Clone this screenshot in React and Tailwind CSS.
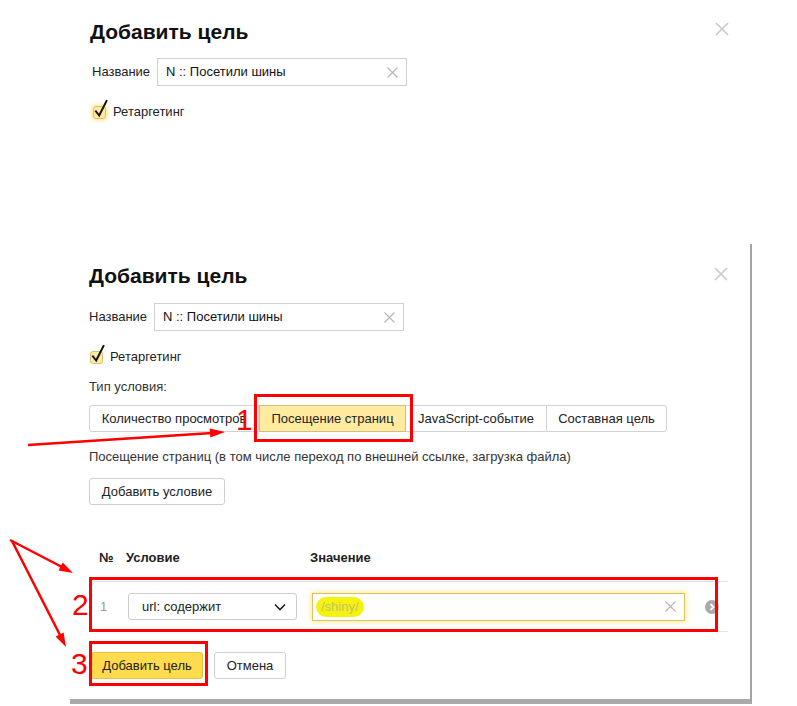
import React from "react";

function CloseIcon({ className = "" }) {
  return (
    <svg width="14" height="14" viewBox="0 0 14 14" className={className}>
      <path d="M1 1L13 13M13 1L1 13" stroke="#c8c8c8" strokeWidth="1.6" fill="none" />
    </svg>
  );
}

function ClearIcon() {
  return (
    <svg width="11" height="11" viewBox="0 0 11 11" className="shrink-0">
      <path d="M0.5 0.5L10.5 10.5M10.5 0.5L0.5 10.5" stroke="#b5b5b5" strokeWidth="1.1" fill="none" />
    </svg>
  );
}

function Checkbox({ glow }) {
  return (
    <div
      className={
        "relative w-[13px] h-[13px] rounded-[3px] bg-[#ffe9a3] border border-[#d6bf72] shrink-0 " +
        (glow ? "shadow-[0_0_4px_1px_#ffe27a]" : "")
      }
    >
      <svg width="16" height="20" viewBox="0 0 16 20" className="absolute left-[0px] top-[-8px]">
        <path d="M2 12.5L5.2 16.5L12.5 2" stroke="#111" strokeWidth="2" fill="none" strokeLinecap="square" />
      </svg>
    </div>
  );
}

function NameRow({ mt }) {
  return (
    <div className={"flex items-center " + mt}>
      <span className="w-[65px] shrink-0 text-[13px] text-[#222]">Название</span>
      <div className="w-[250px] h-[28px] border border-[#d0d0d0] flex items-center pl-[8px] pr-[8px] justify-between">
        <span className="text-[13px] text-[#111]">N :: Посетили шины</span>
        <ClearIcon />
      </div>
    </div>
  );
}

function RetargetRow({ mt, glow }) {
  return (
    <div className={"flex items-center h-[20px] " + mt}>
      <div className="ml-[1px]">
        <Checkbox glow={glow} />
      </div>
      <span className="ml-[7px] text-[13px] text-[#222]">Ретаргетинг</span>
    </div>
  );
}

export default function App() {
  return (
    <div className="relative w-[797px] h-[706px] bg-white overflow-hidden font-['Liberation_Sans',Arial,sans-serif] text-[13px] text-black">
      {/* First dialog (cropped) */}
      <section className="ml-[72px] w-[680px] h-[244px] pl-[18px] pr-[23px] pt-[20px]">
        <div className="flex items-start justify-between">
          <h1 className="h-[24px] leading-[24px] text-[21px] font-bold text-[#111]">Добавить цель</h1>
          <CloseIcon className="mt-[2px]" />
        </div>
        <div className="ml-[2px]">
          <NameRow mt="mt-[14px]" />
          <RetargetRow mt="mt-[16px]" glow />
        </div>
      </section>

      {/* Second dialog */}
      <section className="ml-[70px] w-[682px] h-[460px] border-r-2 border-b-[5px] border-r-[#a3a3a3] border-b-[#a9a9a9] pl-[19px] pr-[22px] pt-[20px]">
        <div className="flex items-start justify-between">
          <h1 className="h-[24px] leading-[24px] text-[21px] font-bold text-[#111]">Добавить цель</h1>
          <CloseIcon className="mt-[3px]" />
        </div>
        <NameRow mt="mt-[15px]" />
        <RetargetRow mt="mt-[16px]" />

        <div className="mt-[11px] leading-[18px] text-[#333]">Тип условия:</div>

        <div className="mt-[9px] flex h-[27px]">
          <div className="w-[170px] flex items-center justify-center border border-[#d2d2d2] rounded-l-[3px] text-[#222]">
            Количество просмотров
          </div>
          <div className="w-[147px] flex items-center justify-center border border-[#d3bf7c] bg-[#ffeba0] text-[#222]">
            Посещение страниц
          </div>
          <div className="w-[140px] flex items-center justify-center border-y border-[#d2d2d2] text-[#222]">
            JavaScript-событие
          </div>
          <div className="w-[121px] flex items-center justify-center border border-[#d2d2d2] rounded-r-[3px] text-[#222]">
            Составная цель
          </div>
        </div>

        <div className="mt-[16px] leading-[18px] text-[#333]">
          Посещение страниц (в том числе переход по внешней ссылке, загрузка файла)
        </div>

        <button className="mt-[12px] h-[27px] w-[136px] border border-[#cfcfcf] rounded-[3px] text-[13px] text-[#222] flex items-center justify-center">
          Добавить условие
        </button>

        <div className="mt-[44px] flex leading-[18px] font-bold text-[#222] w-[639px]">
          <span className="w-[37px] pl-[10px]">№</span>
          <span className="w-[184px]">Условие</span>
          <span>Значение</span>
        </div>

        <div className="mt-[14px] w-[639px] h-[51px] border-y border-[#e4e4e4] flex items-center">
          <span className="w-[39px] pl-[11px] text-[#999]">1</span>
          <div className="w-[169px] h-[27px] border border-[#cdcdcd] rounded-[3px] flex items-center justify-between pl-[13px] pr-[10px] text-[#222]">
            <span>url: содержит</span>
            <svg width="12" height="8" viewBox="0 0 12 8">
              <path d="M1 1.5L6 6.5L11 1.5" stroke="#222" strokeWidth="1.6" fill="none" />
            </svg>
          </div>
          <div className="ml-[15px] w-[373px] h-[28px] border border-[#dcc064] shadow-[0_0_5px_1px_#ffe88a] flex items-center justify-between pl-[3px] pr-[8px]">
            <span className="px-[5px] h-[20px] leading-[20px] rounded-full bg-[#f4f20e] text-[#c4c26a] text-[13px]">
              /shiny/
            </span>
            <ClearIcon />
          </div>
          <svg width="14" height="14" viewBox="0 0 14 14" className="ml-[20px]">
            <circle cx="7" cy="7" r="7" fill="#a9a9a9" />
            <path d="M5.5 4L8.5 7L5.5 10" stroke="#fff" strokeWidth="1.8" fill="none" />
          </svg>
        </div>

        <div className="mt-[20px] ml-[2px] flex gap-[11px]">
          <button className="h-[27px] w-[112px] rounded-[3px] bg-[#ffdb4d] border border-[#e8c23a] text-[13px] text-[#222] flex items-center justify-center">
            Добавить цель
          </button>
          <button className="h-[27px] w-[72px] rounded-[3px] border border-[#cfcfcf] text-[13px] text-[#222] flex items-center justify-center">
            Отмена
          </button>
        </div>
      </section>

      {/* Annotations */}
      <div className="absolute left-[254px] top-[394px] w-[159px] h-[48px] border-[3px] border-[#ff0000]" />
      <div className="absolute left-[89px] top-[577px] w-[629px] h-[55px] border-[3px] border-[#ff0000]" />
      <div className="absolute left-[89px] top-[641px] w-[119px] h-[45px] border-[3px] border-[#ff0000]" />

      <span className="absolute left-[236px] top-[403px] text-[30px] leading-[34px] text-[#ff0000]">1</span>
      <span className="absolute left-[72px] top-[588px] text-[30px] leading-[34px] text-[#ff0000]">2</span>
      <span className="absolute left-[71px] top-[647px] text-[30px] leading-[34px] text-[#ff0000]">3</span>

      <svg className="absolute left-0 top-0 pointer-events-none" width="797" height="706" viewBox="0 0 797 706">
        <g stroke="#ff0000" strokeWidth="2.5" fill="none">
          <line x1="28" y1="445" x2="212" y2="433" />
          <line x1="10" y1="540" x2="62" y2="567" />
          <line x1="12" y1="541" x2="60" y2="635" />
        </g>
        <g fill="#ff0000">
          <polygon points="225,432 210.3,437.5 209.7,428.5" />
          <polygon points="73,573 58.5,570.5 62.7,562.5" />
          <polygon points="66,647 55.6,636.5 63.6,632.5" />
        </g>
      </svg>
    </div>
  );
}
